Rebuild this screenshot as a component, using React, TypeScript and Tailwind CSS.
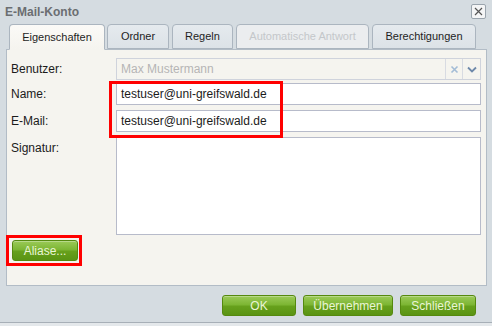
import React from "react";

const GreenButton = ({ label, w }: { label: string; w: string }) => (
  <button
    className={`${w} h-[21px] rounded-[3px] border border-[#55890f] bg-[linear-gradient(to_bottom,#9bca58_0%,#7db634_45%,#66a01c_55%,#5a9414_100%)] text-[12px] text-[#eaf5d6] flex items-center justify-center shadow-[inset_0_1px_0_rgba(255,255,255,0.3)]`}
  >
    {label}
  </button>
);

const Tab = ({
  label,
  w,
  active,
  disabled,
}: {
  label: string;
  w: string;
  active?: boolean;
  disabled?: boolean;
}) => (
  <div
    className={`${w} h-[25px] rounded-t-[4px] border border-[#abb5bf] flex items-center justify-center text-[11px] ${
      active
        ? "bg-[linear-gradient(to_bottom,#fbfaf7,#f5f4ef)] border-b-[#f5f4ef] text-[#1e1e1e] relative z-10 h-[26px] -mb-[1px]"
        : disabled
        ? "bg-[#ebedef] text-[#c4c7ca]"
        : "bg-[linear-gradient(to_bottom,#e5eaee,#dce2e7)] text-[#1e1e1e]"
    }`}
  >
    {label}
  </div>
);

export default function App() {
  return (
    <div
      className="w-[492px] h-[326px] bg-[#d5dce1] relative overflow-hidden"
      style={{ fontFamily: '"Liberation Sans", Arial, sans-serif' }}
    >
      {/* title bar */}
      <div className="h-[24px] flex items-center justify-between pl-[5px] pr-[6px]">
        <span className="text-[12px] font-bold text-[#6b6e71]">E-Mail-Konto</span>
        <div className="w-[15px] h-[15px] mt-[-2px] rounded-[2px] border border-[#9aa4ad] bg-[#f4f5f6] flex items-center justify-center">
          <svg width="9" height="9" viewBox="0 0 9 9">
            <path d="M1 1 L8 8 M8 1 L1 8" stroke="#555" strokeWidth="1.2" />
          </svg>
        </div>
      </div>

      {/* tabs */}
      <div className="flex items-end pl-[9px] h-[25px]">
        <Tab label="Eigenschaften" w="w-[96px]" active />
        <div className="w-[2px]" />
        <Tab label="Ordner" w="w-[62px]" />
        <div className="w-[3px]" />
        <Tab label="Regeln" w="w-[61px]" />
        <div className="w-[3px]" />
        <Tab label="Automatische Antwort" w="w-[133px]" disabled />
        <div className="w-[3px]" />
        <Tab label="Berechtigungen" w="w-[104px]" />
      </div>

      {/* panel */}
      <div className="ml-[6px] mr-[5px] h-[237px] border border-[#b2bcc6] bg-[#f5f4ef] pt-[8px] pl-[4px] pr-[5px] text-[12px] text-[#1b1b1b]">
        <div className="flex h-[22px]">
          <div className="w-[105px] flex items-center">Benutzer:</div>
          <div className="flex-1 flex border border-[#cfd3dc] bg-[#f5f4ef]">
            <div className="flex-1 flex items-center pl-[4px] text-[#b5b5b5] text-[12px]">Max Mustermann</div>
            <div className="w-[17px] border-l border-[#d8dbe2] flex items-center justify-center">
              <svg width="9" height="9" viewBox="0 0 9 9">
                <path d="M1.5 1.5 L7.5 7.5 M7.5 1.5 L1.5 7.5" stroke="#a3bcd6" strokeWidth="1.6" />
              </svg>
            </div>
            <div className="w-[18px] border-l border-[#d8dbe2] flex items-center justify-center">
              <svg width="10" height="7" viewBox="0 0 10 7">
                <path d="M1 1.5 L5 5.5 L9 1.5" stroke="#6e89aa" strokeWidth="1.8" fill="none" />
              </svg>
            </div>
          </div>
        </div>

        <div className="flex h-[22px] mt-[3px]">
          <div className="w-[105px] flex items-center">Name:</div>
          <div className="flex-1 flex items-center border border-[#b7bbca] bg-white pl-[4px]">
            testuser@uni-greifswald.de
          </div>
        </div>

        <div className="flex h-[22px] mt-[5px]">
          <div className="w-[105px] flex items-center">E-Mail:</div>
          <div className="flex-1 flex items-center border border-[#b7bbca] bg-white pl-[4px]">
            testuser@uni-greifswald.de
          </div>
        </div>

        <div className="flex h-[98px] mt-[5px]">
          <div className="w-[105px] pt-[2px]">Signatur:</div>
          <div className="flex-1 border border-[#b7bbca] bg-white" />
        </div>

        <div className="mt-[5px] ml-[1px]">
          <GreenButton label="Aliase..." w="w-[66px]" />
        </div>
      </div>

      {/* footer buttons */}
      <div className="flex justify-end gap-[7px] pr-[16px] mt-[9px]">
        <GreenButton label="OK" w="w-[74px]" />
        <GreenButton label="Übernehmen" w="w-[90px]" />
        <GreenButton label="Schließen" w="w-[76px]" />
      </div>

      {/* bottom edge */}
      <div className="absolute left-0 right-0 top-[322px] h-[1px] bg-[#a7afb7]" />
      <div className="absolute left-0 right-0 top-[323px] bottom-0 bg-[#e4e8eb]" />

      {/* red highlight boxes */}
      <div className="absolute left-[109px] top-[81px] w-[174px] h-[57px] border-[3px] border-[#ff0000]" />
      <div className="absolute left-[6px] top-[235px] w-[76px] h-[31px] border-[3px] border-[#ff0000]" />
    </div>
  );
}
